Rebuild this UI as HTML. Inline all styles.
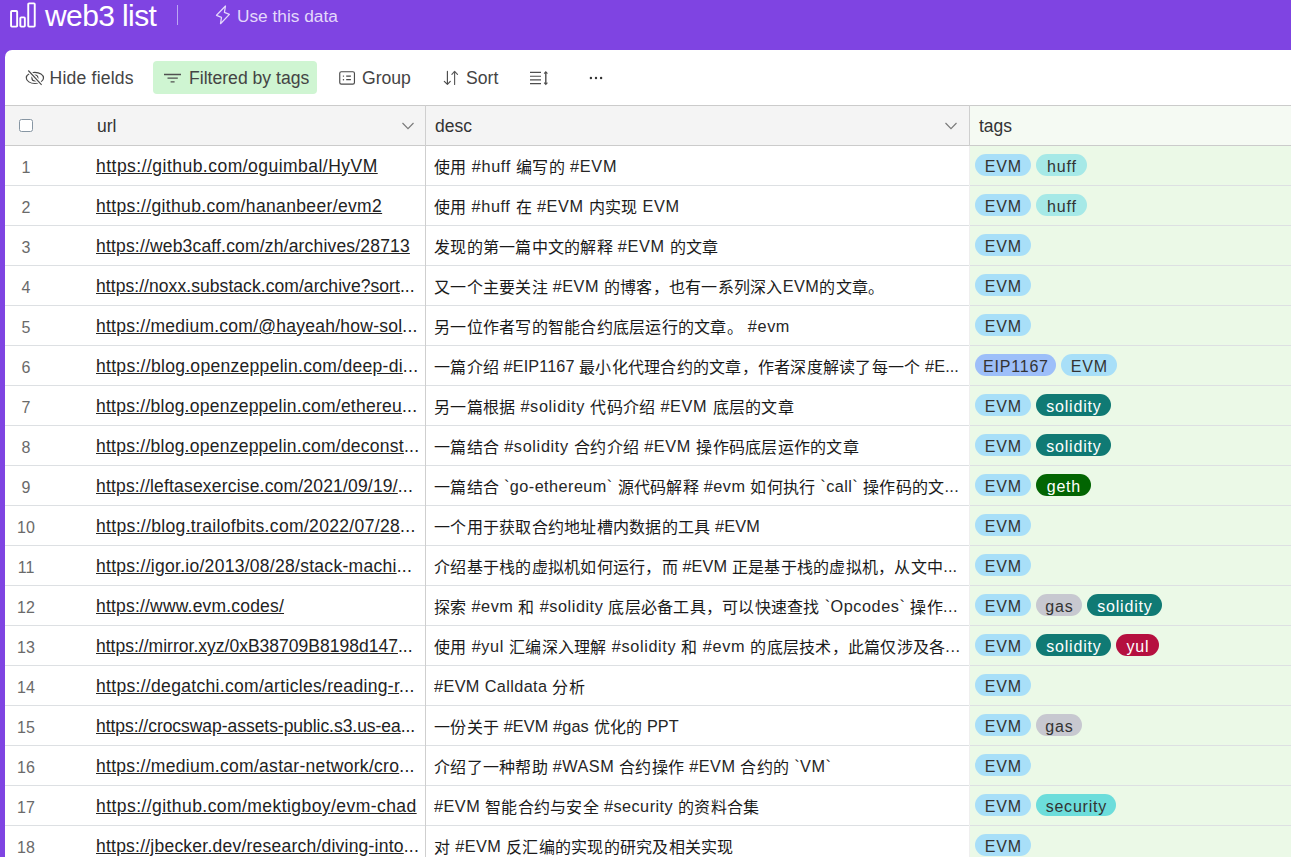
<!DOCTYPE html>
<html lang="zh-CN"><head><meta charset="utf-8">
<style>
*{box-sizing:border-box;margin:0;padding:0}
html,body{width:1291px;height:857px;overflow:hidden}
body{background:#7f44e2;font-family:"Liberation Sans",sans-serif;position:relative}
.abs{position:absolute}
#title{position:absolute;left:45px;top:-1px;font-size:30px;letter-spacing:-0.6px;color:#fff;line-height:34px;white-space:nowrap}
#sep{position:absolute;left:177px;top:5px;width:1px;height:20px;background:#bca6f3}
#use{position:absolute;left:237px;top:4.5px;font-size:17.3px;color:#e4d8fb;line-height:22px;white-space:nowrap}
#panel{position:absolute;left:5px;top:50px;width:1300px;height:820px;background:#fff;border-top-left-radius:7px}
.tb{position:absolute;top:67px;font-size:17.6px;color:#444;line-height:22px;white-space:nowrap}
#filt{position:absolute;left:153px;top:61px;width:164px;height:33px;background:#cff5d2;border-radius:4px}
#hdr{position:absolute;left:5px;top:105px;width:1300px;height:41px;background:#f4f4f4;border-top:1px solid #cbcbcb;border-bottom:1px solid #cbcbcb}
#hdrtags{position:absolute;left:970px;top:106px;width:330px;height:39px;background:#f5faf3}
.hd{position:absolute;top:115.3px;font-size:17.5px;color:#333;line-height:22px}
.row{position:absolute;left:5px;width:1300px;height:40px;border-bottom:1px solid #dde0e3}
.num{position:absolute;left:0;width:42px;text-align:center;top:1.5px;line-height:40px;font-size:16px;color:#6a6a6a}
.url{position:absolute;left:91px;top:0px;line-height:40px;font-size:17.5px;color:#222;white-space:nowrap;width:330px;overflow:hidden}
.url u{text-decoration:underline;text-underline-offset:1.2px}
.desc{position:absolute;left:429px;top:0;line-height:40px;font-size:16.25px;color:#262626;white-space:nowrap;width:535px;overflow:hidden}
.desc .c{font-size:16px;letter-spacing:0.25px;color:#1a1a1a;position:relative;top:0.7px}
.tags{position:absolute;left:965px;top:0;height:39px;width:330px;background:#ebf9e7;padding:8px 0 0 5px;white-space:nowrap;font-size:0}
.tag{display:inline-block;height:22px;line-height:25px;border-radius:11px;text-align:center;font-size:16px;letter-spacing:0.8px;text-indent:0.8px;margin-right:5px;vertical-align:top}
.vl{position:absolute;width:1px;background:#cfcfcf;top:105px;height:760px}
</style></head><body>
<div id="panel"></div>
<div id="filt"></div>
<div id="hdr"></div>
<div id="hdrtags"></div>
<div id="title">web3 list</div>
<div id="sep"></div>
<div id="use">Use this data</div>
<div class="tb" style="left:49.5px;letter-spacing:0.2px">Hide fields</div>
<div class="tb" style="left:189px">Filtered by tags</div>
<div class="tb" style="left:362px">Group</div>
<div class="tb" style="left:466px">Sort</div>
<div class="abs" style="left:19px;top:119px;width:14px;height:13px;border:1.2px solid #8796a3;border-radius:2.5px;background:#fff"></div>
<div class="hd" style="left:97px">url</div>
<div class="hd" style="left:435px">desc</div>
<div class="hd" style="left:979px">tags</div>
<svg class="abs" style="left:0;top:0" width="1291" height="146" viewBox="0 0 1291 146" fill="none">
<g stroke="#fff" stroke-width="1.9"><rect x="11.05" y="11.05" width="6.1" height="15.6" rx="0.8"/><rect x="20.35" y="17.35" width="4.5" height="9.3" rx="0.8"/><rect x="28.25" y="3.35" width="6.5" height="23.3" rx="0.8"/></g>
<path d="M225.5 6 L216.5 15.3 L221.5 17.3 L220.5 23.7 L229.4 14.4 L224.4 12.4 Z" stroke="#e4d8fb" stroke-width="1.25" stroke-linejoin="round"/>
<g stroke="#484848" stroke-width="1.15">
<ellipse cx="34.9" cy="77.9" rx="8.6" ry="5.6"/><circle cx="34.9" cy="78" r="3"/>
<path d="M28.3 70.5 L41.6 84.8" stroke="#fff" stroke-width="3.6"/>
<path d="M28.3 70.5 L41.6 84.8"/>
</g>
<g stroke="#505050" stroke-width="1.3"><path d="M164 74.5 H181 M167.5 78.2 H177.8 M170.6 81.9 H174.6"/></g>
<g stroke="#4a4a4a" stroke-width="1.15">
<rect x="339.75" y="71.75" width="14.7" height="12.3" rx="1.6"/>
<path d="M346.2 76.1 H350.9 M346.2 79.7 H350.9" stroke-width="1.2"/>
<path d="M343.4 76.1 H343.5 M343.4 79.7 H343.5" stroke-width="1.4" stroke-linecap="round"/>
</g>
<g stroke="#4a4a4a" stroke-width="1.15" stroke-linejoin="round" stroke-linecap="round">
<path d="M447.4 71.4 V84.3 M444.3 81.3 L447.4 84.4 L450.3 81.3"/>
<path d="M454.6 84.4 V71.6 M451.9 74.4 L454.6 71.4 L457.5 74.4" stroke="#5a5a5a"/>
</g>
<g stroke="#4e4e4e" stroke-width="1.1">
<path d="M530 72.4 H541 M530 76.2 H541 M530 79.9 H541 M530 83.6 H541" />
<path d="M545.8 72.2 V84" stroke-width="1.4"/>
<path d="M544.2 73.6 L545.8 71.8 L547.4 73.6 M544.2 82.6 L545.8 84.4 L547.4 82.6" stroke-width="1.2"/>
</g>
<g fill="#333"><circle cx="590.9" cy="78" r="1.2"/><circle cx="596" cy="78" r="1.2"/><circle cx="601.1" cy="78" r="1.2"/></g>
<g stroke="#7a7a7a" stroke-width="1.15"><path d="M402.5 123 L408 128.6 L413.5 123 M945.5 123 L951 128.6 L956.5 123"/></g>
</svg>
<div class="row" style="top:146px">
<div class="num">1</div>
<div class="url"><span class="uu" style="letter-spacing:0.475px"><u>https://github.com/oguimbal/HyVM</u></span></div>
<div class="desc"><span class="dd"><span class="c">使用</span><span class="l" style="letter-spacing:0.683px"> #huff </span><span class="c">编写的</span><span class="l" style="letter-spacing:0.683px"> #EVM</span></span></div>
<div class="tags"><span class="tag" style="width:56px;background:#a8dff8;color:#333">EVM</span><span class="tag" style="width:51px;background:#a6e9e7;color:#333">huff</span></div>
</div>
<div class="row" style="top:186px">
<div class="num">2</div>
<div class="url"><span class="uu" style="letter-spacing:0.358px"><u>https://github.com/hananbeer/evm2</u></span></div>
<div class="desc"><span class="dd"><span class="c">使用</span><span class="l" style="letter-spacing:0.600px"> #huff </span><span class="c">在</span><span class="l" style="letter-spacing:0.600px"> #EVM </span><span class="c">内实现</span><span class="l" style="letter-spacing:0.600px"> EVM</span></span></div>
<div class="tags"><span class="tag" style="width:56px;background:#a8dff8;color:#333">EVM</span><span class="tag" style="width:51px;background:#a6e9e7;color:#333">huff</span></div>
</div>
<div class="row" style="top:226px">
<div class="num">3</div>
<div class="url"><span class="uu" style="letter-spacing:0.179px"><u>https://web3caff.com/zh/archives/28713</u></span></div>
<div class="desc"><span class="dd"><span class="c">发现的第一篇中文的解释</span><span class="l" style="letter-spacing:0.600px"> #EVM </span><span class="c">的文章</span></span></div>
<div class="tags"><span class="tag" style="width:56px;background:#a8dff8;color:#333">EVM</span></div>
</div>
<div class="row" style="top:266px">
<div class="num">4</div>
<div class="url"><span class="uu" style="letter-spacing:0.063px"><u>https://noxx.substack.com/archive?sort</u>...</span></div>
<div class="desc"><span class="dd"><span class="c">又一个主要关注</span><span class="l" style="letter-spacing:0.489px"> #EVM </span><span class="c">的博客，也有一系列深入</span><span class="l" style="letter-spacing:0.489px">EVM</span><span class="c">的文章。</span></span></div>
<div class="tags"><span class="tag" style="width:56px;background:#a8dff8;color:#333">EVM</span></div>
</div>
<div class="row" style="top:306px">
<div class="num">5</div>
<div class="url"><span class="uu" style="letter-spacing:0.249px"><u>https://medium.com/@hayeah/how-sol</u>...</span></div>
<div class="desc"><span class="dd"><span class="c">另一位作者写的智能合约底层运行的文章。</span><span class="l" style="letter-spacing:0.600px"> #evm</span></span></div>
<div class="tags"><span class="tag" style="width:56px;background:#a8dff8;color:#333">EVM</span></div>
</div>
<div class="row" style="top:346px">
<div class="num">6</div>
<div class="url"><span class="uu" style="letter-spacing:0.300px"><u>https://blog.openzeppelin.com/deep-di</u>...</span></div>
<div class="desc"><span class="dd"><span class="c">一篇介绍</span><span class="l" style="letter-spacing:0.100px"> #EIP1167 </span><span class="c">最小化代理合约的文章，作者深度解读了每一个</span><span class="l" style="letter-spacing:0.100px"> #E...</span></span></div>
<div class="tags"><span class="tag" style="width:81px;background:#9dbff9;color:#333">EIP1167</span><span class="tag" style="width:56px;background:#a8dff8;color:#333">EVM</span></div>
</div>
<div class="row" style="top:386px">
<div class="num">7</div>
<div class="url"><span class="uu" style="letter-spacing:0.250px"><u>https://blog.openzeppelin.com/ethereu</u>...</span></div>
<div class="desc"><span class="dd"><span class="c">另一篇根据</span><span class="l" style="letter-spacing:0.659px"> #solidity </span><span class="c">代码介绍</span><span class="l" style="letter-spacing:0.659px"> #EVM </span><span class="c">底层的文章</span></span></div>
<div class="tags"><span class="tag" style="width:56px;background:#a8dff8;color:#333">EVM</span><span class="tag" style="width:75px;background:#107a74;color:#fff">solidity</span></div>
</div>
<div class="row" style="top:426px">
<div class="num">8</div>
<div class="url"><span class="uu" style="letter-spacing:0.250px"><u>https://blog.openzeppelin.com/deconst</u>...</span></div>
<div class="desc"><span class="dd"><span class="c">一篇结合</span><span class="l" style="letter-spacing:0.659px"> #solidity </span><span class="c">合约介绍</span><span class="l" style="letter-spacing:0.659px"> #EVM </span><span class="c">操作码底层运作的文章</span></span></div>
<div class="tags"><span class="tag" style="width:56px;background:#a8dff8;color:#333">EVM</span><span class="tag" style="width:75px;background:#107a74;color:#fff">solidity</span></div>
</div>
<div class="row" style="top:466px">
<div class="num">9</div>
<div class="url"><span class="uu" style="letter-spacing:0.185px"><u>https://leftasexercise.com/2021/09/19/</u>...</span></div>
<div class="desc"><span class="dd"><span class="c">一篇结合</span><span class="l" style="letter-spacing:0.444px"> `go-ethereum` </span><span class="c">源代码解释</span><span class="l" style="letter-spacing:0.444px"> #evm </span><span class="c">如何执行</span><span class="l" style="letter-spacing:0.444px"> `call` </span><span class="c">操作码的文</span><span class="l" style="letter-spacing:0.444px">...</span></span></div>
<div class="tags"><span class="tag" style="width:56px;background:#a8dff8;color:#333">EVM</span><span class="tag" style="width:55px;background:#026502;color:#fff">geth</span></div>
</div>
<div class="row" style="top:506px">
<div class="num">10</div>
<div class="url"><span class="uu" style="letter-spacing:0.338px"><u>https://blog.trailofbits.com/2022/07/28</u>...</span></div>
<div class="desc"><span class="dd"><span class="c">一个用于获取合约地址槽内数据的工具</span><span class="l" style="letter-spacing:0.200px"> #EVM</span></span></div>
<div class="tags"><span class="tag" style="width:56px;background:#a8dff8;color:#333">EVM</span></div>
</div>
<div class="row" style="top:546px">
<div class="num">11</div>
<div class="url"><span class="uu" style="letter-spacing:0.283px"><u>https://igor.io/2013/08/28/stack-machi</u>...</span></div>
<div class="desc"><span class="dd"><span class="c">介绍基于栈的虚拟机如何运行，而</span><span class="l" style="letter-spacing:0.156px"> #EVM </span><span class="c">正是基于栈的虚拟机，从文中</span><span class="l" style="letter-spacing:0.156px">...</span></span></div>
<div class="tags"><span class="tag" style="width:56px;background:#a8dff8;color:#333">EVM</span></div>
</div>
<div class="row" style="top:586px">
<div class="num">12</div>
<div class="url"><span class="uu" style="letter-spacing:0.191px"><u>https://www.evm.codes/</u></span></div>
<div class="desc"><span class="dd"><span class="c">探索</span><span class="l" style="letter-spacing:0.535px"> #evm </span><span class="c">和</span><span class="l" style="letter-spacing:0.535px"> #solidity </span><span class="c">底层必备工具，可以快速查找</span><span class="l" style="letter-spacing:0.535px"> `Opcodes` </span><span class="c">操作</span><span class="l" style="letter-spacing:0.535px">...</span></span></div>
<div class="tags"><span class="tag" style="width:56px;background:#a8dff8;color:#333">EVM</span><span class="tag" style="width:46px;background:#c7c8d0;color:#333">gas</span><span class="tag" style="width:75px;background:#107a74;color:#fff">solidity</span></div>
</div>
<div class="row" style="top:626px">
<div class="num">13</div>
<div class="url"><span class="uu" style="letter-spacing:0.010px"><u>https://mirror.xyz/0xB38709B8198d147</u>...</span></div>
<div class="desc"><span class="dd"><span class="c">使用</span><span class="l" style="letter-spacing:0.638px"> #yul </span><span class="c">汇编深入理解</span><span class="l" style="letter-spacing:0.638px"> #solidity </span><span class="c">和</span><span class="l" style="letter-spacing:0.638px"> #evm </span><span class="c">的底层技术，此篇仅涉及各</span><span class="l" style="letter-spacing:0.638px">...</span></span></div>
<div class="tags"><span class="tag" style="width:56px;background:#a8dff8;color:#333">EVM</span><span class="tag" style="width:75px;background:#107a74;color:#fff">solidity</span><span class="tag" style="width:43px;background:#b5103f;color:#fff">yul</span></div>
</div>
<div class="row" style="top:666px">
<div class="num">14</div>
<div class="url"><span class="uu" style="letter-spacing:0.314px"><u>https://degatchi.com/articles/reading-r</u>...</span></div>
<div class="desc"><span class="dd"><span class="l" style="letter-spacing:0.386px">#EVM Calldata </span><span class="c">分析</span></span></div>
<div class="tags"><span class="tag" style="width:56px;background:#a8dff8;color:#333">EVM</span></div>
</div>
<div class="row" style="top:706px">
<div class="num">15</div>
<div class="url"><span class="uu" style="letter-spacing:-0.043px"><u>https://crocswap-assets-public.s3.us-ea</u>...</span></div>
<div class="desc"><span class="dd"><span class="c">一份关于</span><span class="l" style="letter-spacing:0.133px"> #EVM #gas </span><span class="c">优化的</span><span class="l" style="letter-spacing:0.133px"> PPT</span></span></div>
<div class="tags"><span class="tag" style="width:56px;background:#a8dff8;color:#333">EVM</span><span class="tag" style="width:46px;background:#c7c8d0;color:#333">gas</span></div>
</div>
<div class="row" style="top:746px">
<div class="num">16</div>
<div class="url"><span class="uu" style="letter-spacing:0.292px"><u>https://medium.com/astar-network/cro</u>...</span></div>
<div class="desc"><span class="dd"><span class="c">介绍了一种帮助</span><span class="l" style="letter-spacing:0.489px"> #WASM </span><span class="c">合约操作</span><span class="l" style="letter-spacing:0.489px"> #EVM </span><span class="c">合约的</span><span class="l" style="letter-spacing:0.489px"> `VM`</span></span></div>
<div class="tags"><span class="tag" style="width:56px;background:#a8dff8;color:#333">EVM</span></div>
</div>
<div class="row" style="top:786px">
<div class="num">17</div>
<div class="url"><span class="uu" style="letter-spacing:0.438px"><u>https://github.com/mektigboy/evm-chad</u></span></div>
<div class="desc"><span class="dd"><span class="l" style="letter-spacing:0.475px">#EVM </span><span class="c">智能合约与安全</span><span class="l" style="letter-spacing:0.475px"> #security </span><span class="c">的资料合集</span></span></div>
<div class="tags"><span class="tag" style="width:56px;background:#a8dff8;color:#333">EVM</span><span class="tag" style="width:80px;background:#6cdddb;color:#333">security</span></div>
</div>
<div class="row" style="top:826px">
<div class="num">18</div>
<div class="url"><span class="uu" style="letter-spacing:0.228px"><u>https://jbecker.dev/research/diving-into</u>...</span></div>
<div class="desc"><span class="dd"><span class="c">对</span><span class="l" style="letter-spacing:0.433px"> #EVM </span><span class="c">反汇编的实现的研究及相关实现</span></span></div>
<div class="tags"><span class="tag" style="width:56px;background:#a8dff8;color:#333">EVM</span></div>
</div>
<div class="vl" style="left:425px"></div>
<div class="vl" style="left:969px;height:41px"></div>
<div class="vl" style="left:969px;top:146px;height:720px;background:#efefef"></div>
</body></html>
